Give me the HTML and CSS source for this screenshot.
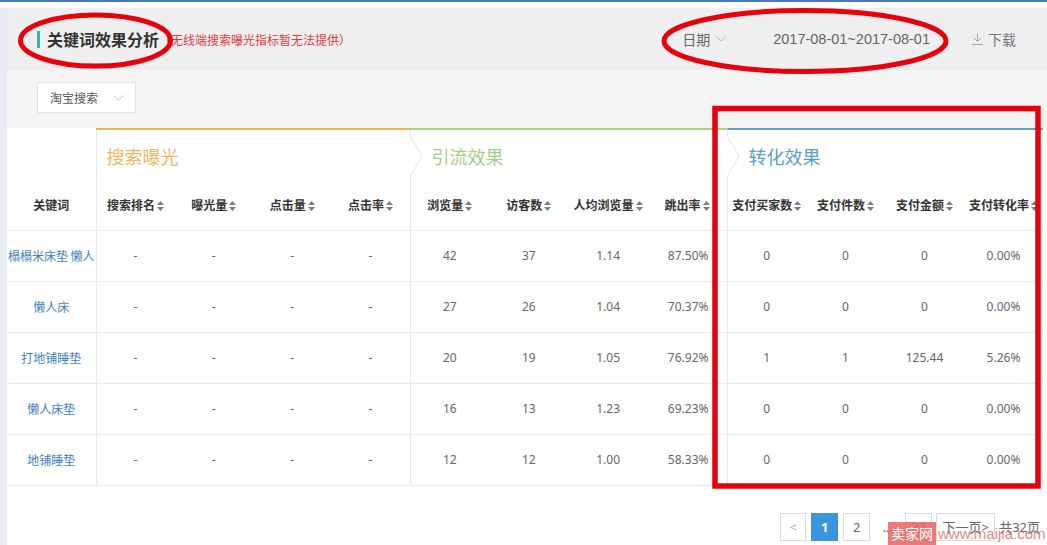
FILE: index.html
```html
<!DOCTYPE html>
<html lang="zh-CN">
<head>
<meta charset="utf-8">
<title>关键词效果分析</title>
<link rel="stylesheet" href="styles.css">
</head>
<body>
<div class="topline"></div>
<div class="page">
  <div class="strip"></div>
  <div class="main">
    <div class="header">
      <div class="title">
        <span class="title-bar"></span>
        <h1>关键词效果分析</h1>
        <span class="note">（无线端搜索曝光指标暂无法提供）</span>
      </div>
      <div class="tools">
        <span class="date-label">日期<svg class="chev" width="10" height="6" viewBox="0 0 10 6"><polyline points="0.5,0.5 5,5 9.5,0.5" fill="none" stroke="#c4c4c4" stroke-width="1"/></svg></span>
        <span class="date-range">2017-08-01~2017-08-01</span>
        <span class="download"><svg width="11" height="12" viewBox="0 0 11 12"><line x1="5.5" y1="0.5" x2="5.5" y2="8.5" stroke="#aaa" stroke-width="1"/><polyline points="2,5 5.5,8.5 9,5" fill="none" stroke="#aaa" stroke-width="1"/><line x1="0" y1="11.5" x2="11" y2="11.5" stroke="#aaa" stroke-width="1"/></svg>下载</span>
      </div>
    </div>
    <div class="filter">
      <div class="select">淘宝搜索<svg class="chev" width="11" height="6" viewBox="0 0 11 6"><polyline points="0.5,0.5 5.5,5 10.5,0.5" fill="none" stroke="#c4c4c4" stroke-width="1"/></svg></div>
    </div>
    <div class="content">
      <table class="data">
        <colgroup>
          <col class="c-kw">
          <col class="c-a"><col class="c-a"><col class="c-a"><col class="c-a">
          <col class="c-b"><col class="c-b"><col class="c-b"><col class="c-b">
          <col class="c-c"><col class="c-c"><col class="c-c"><col class="c-c">
        </colgroup>
        <thead>
          <tr class="groups">
            <th class="g-empty"></th>
            <th colspan="4" class="g g-search gs">搜索曝光</th>
            <th colspan="4" class="g g-flow gs"><svg class="notch" width="14" height="42" viewBox="0 0 14 42"><polyline points="0,0 12,20 0,41" fill="#fff" stroke="#e6e6e6" stroke-width="1"/></svg>引流效果</th>
            <th colspan="4" class="g g-conv gs"><svg class="notch" width="14" height="42" viewBox="0 0 14 42"><polyline points="0,0 12,20 0,41" fill="#fff" stroke="#e6e6e6" stroke-width="1"/></svg>转化效果</th>
          </tr>
          <tr class="cols">
            <th>关键词</th>
            <th class="gs">搜索排名<svg class="sort" width="7" height="10" viewBox="0 0 7 10"><polygon points="0,4 3.5,0 7,4" fill="#7d7d7d"/><polygon points="0,6 3.5,10 7,6" fill="#7d7d7d"/></svg></th>
            <th>曝光量<svg class="sort" width="7" height="10" viewBox="0 0 7 10"><polygon points="0,4 3.5,0 7,4" fill="#7d7d7d"/><polygon points="0,6 3.5,10 7,6" fill="#7d7d7d"/></svg></th>
            <th>点击量<svg class="sort" width="7" height="10" viewBox="0 0 7 10"><polygon points="0,4 3.5,0 7,4" fill="#7d7d7d"/><polygon points="0,6 3.5,10 7,6" fill="#7d7d7d"/></svg></th>
            <th>点击率<svg class="sort" width="7" height="10" viewBox="0 0 7 10"><polygon points="0,4 3.5,0 7,4" fill="#7d7d7d"/><polygon points="0,6 3.5,10 7,6" fill="#7d7d7d"/></svg></th>
            <th class="gs">浏览量<svg class="sort" width="7" height="10" viewBox="0 0 7 10"><polygon points="0,4 3.5,0 7,4" fill="#7d7d7d"/><polygon points="0,6 3.5,10 7,6" fill="#7d7d7d"/></svg></th>
            <th>访客数<svg class="sort" width="7" height="10" viewBox="0 0 7 10"><polygon points="0,4 3.5,0 7,4" fill="#7d7d7d"/><polygon points="0,6 3.5,10 7,6" fill="#4f8fc4"/></svg></th>
            <th>人均浏览量<svg class="sort" width="7" height="10" viewBox="0 0 7 10"><polygon points="0,4 3.5,0 7,4" fill="#7d7d7d"/><polygon points="0,6 3.5,10 7,6" fill="#7d7d7d"/></svg></th>
            <th>跳出率<svg class="sort" width="7" height="10" viewBox="0 0 7 10"><polygon points="0,4 3.5,0 7,4" fill="#7d7d7d"/><polygon points="0,6 3.5,10 7,6" fill="#7d7d7d"/></svg></th>
            <th class="gs">支付买家数<svg class="sort" width="7" height="10" viewBox="0 0 7 10"><polygon points="0,4 3.5,0 7,4" fill="#7d7d7d"/><polygon points="0,6 3.5,10 7,6" fill="#7d7d7d"/></svg></th>
            <th>支付件数<svg class="sort" width="7" height="10" viewBox="0 0 7 10"><polygon points="0,4 3.5,0 7,4" fill="#7d7d7d"/><polygon points="0,6 3.5,10 7,6" fill="#7d7d7d"/></svg></th>
            <th>支付金额<svg class="sort" width="7" height="10" viewBox="0 0 7 10"><polygon points="0,4 3.5,0 7,4" fill="#7d7d7d"/><polygon points="0,6 3.5,10 7,6" fill="#7d7d7d"/></svg></th>
            <th>支付转化率<svg class="sort" width="7" height="10" viewBox="0 0 7 10"><polygon points="0,4 3.5,0 7,4" fill="#7d7d7d"/><polygon points="0,6 3.5,10 7,6" fill="#7d7d7d"/></svg></th>
          </tr>
        </thead>
        <tbody>
          <tr>
            <td class="kw">榻榻米床垫 懒人</td>
            <td class="gs">-</td><td>-</td><td>-</td><td>-</td>
            <td class="gs">42</td><td>37</td><td>1.14</td><td class="rt">87.50%</td>
            <td class="gs">0</td><td>0</td><td>0</td><td>0.00%</td>
          </tr>
          <tr>
            <td class="kw">懒人床</td>
            <td class="gs">-</td><td>-</td><td>-</td><td>-</td>
            <td class="gs">27</td><td>26</td><td>1.04</td><td class="rt">70.37%</td>
            <td class="gs">0</td><td>0</td><td>0</td><td>0.00%</td>
          </tr>
          <tr>
            <td class="kw">打地铺睡垫</td>
            <td class="gs">-</td><td>-</td><td>-</td><td>-</td>
            <td class="gs">20</td><td>19</td><td>1.05</td><td class="rt">76.92%</td>
            <td class="gs">1</td><td>1</td><td>125.44</td><td>5.26%</td>
          </tr>
          <tr>
            <td class="kw">懒人床垫</td>
            <td class="gs">-</td><td>-</td><td>-</td><td>-</td>
            <td class="gs">16</td><td>13</td><td>1.23</td><td class="rt">69.23%</td>
            <td class="gs">0</td><td>0</td><td>0</td><td>0.00%</td>
          </tr>
          <tr>
            <td class="kw">地铺睡垫</td>
            <td class="gs">-</td><td>-</td><td>-</td><td>-</td>
            <td class="gs">12</td><td>12</td><td>1.00</td><td class="rt">58.33%</td>
            <td class="gs">0</td><td>0</td><td>0</td><td>0.00%</td>
          </tr>
        </tbody>
      </table>
      <div class="pager">
        <span class="pg">&lt;</span>
        <span class="pg active">1</span>
        <span class="pg">2</span>
        <span class="dots">...</span>
        <span class="pg">32</span>
        <span class="pg next">下一页&gt;</span>
        <span class="total">共32页</span>
      </div>
    </div>
  </div>
</div>
<div class="watermark"><span class="wm-box">卖家网</span><span class="wm-url">www.maijia.com</span></div>
<svg class="marks" width="1047" height="545" viewBox="0 0 1047 545">
  <ellipse cx="95.5" cy="40.5" rx="75" ry="25.5" fill="none" stroke="#e8000b" stroke-width="5"/>
  <ellipse cx="805" cy="41" rx="141" ry="30.5" fill="none" stroke="#e8000b" stroke-width="5"/>
  <rect x="715" y="108.5" width="323" height="377.5" fill="none" stroke="#e8000b" stroke-width="5.5"/>
</svg>
</body>
</html>
```
FILE: styles.css
```css
* { box-sizing: border-box; }
html, body {
  margin: 0;
  padding: 0;
  width: 1047px;
  height: 545px;
  overflow: hidden;
  background: #fff;
  font-family: "Noto Sans", "Noto Sans CJK SC", sans-serif;
  color: #666;
  position: relative;
}
.topline {
  height: 2px;
  background: #4a78c0;
  margin-bottom: 6px;
}
.page {
  display: flex;
  height: 537px;
}
.strip {
  width: 7px;
  flex: none;
  background: #e8edf2;
}
.main {
  flex: 1;
  min-width: 0;
  overflow: hidden;
  display: flex;
  flex-direction: column;
}
.header {
  height: 62px;
  flex: none;
  background: #efefef;
  display: flex;
  align-items: center;
  justify-content: space-between;
  padding: 0 31px 0 30px;
}
.title {
  display: flex;
  align-items: center;
}
.title-bar {
  width: 3px;
  height: 17px;
  background: #38b2ad;
  margin-right: 7px;
}
.title h1 {
  margin: 0;
  font-size: 16px;
  line-height: 22px;
  font-weight: bold;
  color: #333;
  font-family: "Noto Sans CJK SC", sans-serif;
}
.note {
  font-size: 12px;
  color: #e43c3c;
  line-height: 18px;
  margin-top: 2px;
  font-family: "Noto Sans CJK SC", sans-serif;
}
.tools {
  display: flex;
  align-items: center;
  font-size: 14px;
  color: #666;
}
.date-label {
  display: flex;
  align-items: center;
  font-family: "Noto Sans CJK SC", sans-serif;
}
.date-label .chev { margin-left: 6px; }
.date-range {
  margin-left: 47px;
  font-size: 14.5px;
  color: #666;
  font-family: "Liberation Sans", sans-serif;
}
.download {
  margin-left: 42px;
  display: flex;
  align-items: center;
  color: #777;
  font-family: "Noto Sans CJK SC", sans-serif;
}
.download svg { margin-right: 5px; }
.filter {
  height: 58px;
  flex: none;
  background: #f4f4f4;
  padding: 12px 30px 0;
}
.select {
  width: 99px;
  height: 31px;
  background: #fff;
  border: 1px solid #e2e2e2;
  display: flex;
  align-items: center;
  justify-content: space-between;
  padding: 0 11px 0 12px;
  font-size: 12px;
  color: #555;
  font-family: "Noto Sans CJK SC", sans-serif;
}
.content {
  flex: 1;
  background: #fff;
  overflow: hidden;
}
.data {
  border-collapse: collapse;
  table-layout: fixed;
  width: 1036px;
  font-size: 12px;
}
.c-kw { width: 89px; }
.c-a { width: 78.5px; }
.c-b { width: 79.25px; }
.c-c { width: 79px; }
.data th, .data td {
  padding: 0;
  text-align: center;
  white-space: nowrap;
  overflow: hidden;
}
.data .gs { border-left: 1px solid #e8e8e8; }
.data .groups th {
  height: 51px;
  vertical-align: top;
  text-align: left;
  padding-top: 15px;
  font-size: 18px;
  line-height: 22px;
  font-weight: normal;
  font-family: "Noto Sans CJK SC", sans-serif;
  position: relative;
  overflow: visible;
}
.data .groups th.g-search { border-top: 2px solid #f0b44c; color: #f1b75c; padding-left: 10px; }
.data .groups th.g-flow { border-top: 2px solid #a9d18e; color: #a3ce88; padding-left: 21px; }
.data .groups th.g-conv { border-top: 2px solid #5ba3cc; color: #5b9dcb; padding-left: 21px; }
.notch {
  position: absolute;
  left: -1px;
  top: 6px;
}
.cols th {
  height: 50px;
  vertical-align: middle;
  font-size: 12px;
  font-weight: bold;
  color: #333;
  border-bottom: 1px solid #ececec;
  font-family: "Noto Sans CJK SC", sans-serif;
  line-height: 16px;
}
.sort {
  margin-left: 2px;
  vertical-align: -1px;
}
.data td {
  height: 51px;
  border-bottom: 1px solid #ececec;
  color: #666;
  line-height: 16px;
  font-family: "Noto Sans", "Noto Sans CJK SC", sans-serif;
}
.data td.kw {
  color: #3f7fbf;
  font-family: "Noto Sans CJK SC", sans-serif;
}
.data td.rt {
  text-align: right;
  padding-right: 18px;
}
.pager {
  display: flex;
  justify-content: flex-end;
  align-items: center;
  margin-top: 27px;
  padding-right: 7px;
  font-size: 13px;
  font-family: "Noto Sans", "Noto Sans CJK SC", sans-serif;
}
.pg {
  height: 28px;
  width: 27px;
  margin-right: 5px;
  border: 1px solid #dcdcdc;
  display: flex;
  align-items: center;
  justify-content: center;
  color: #666;
  background: #fff;
}
.pg:first-child { width: 26px; color: #aaa; }
.pg.active {
  background: #3a96dc;
  border-color: #3a96dc;
  color: #fff;
  font-weight: bold;
}
.dots { width: 25px; margin-right: 5px; text-align: center; color: #666; }
.pg.next { width: 59px; margin-right: 4px; margin-left: -1px; }
.total { color: #666; white-space: nowrap; }
.watermark {
  position: absolute;
  left: 888px;
  top: 522px;
  display: flex;
  align-items: center;
  white-space: nowrap;
  pointer-events: none;
}
.wm-box {
  background: rgba(232, 98, 98, 0.85);
  color: #fff;
  font-size: 14px;
  line-height: 23px;
  padding: 0 3px;
  font-family: "Noto Sans CJK SC", sans-serif;
}
.wm-url {
  color: rgba(220, 90, 90, 0.75);
  font-size: 15px;
  margin-left: 2px;
  font-family: "Liberation Sans", sans-serif;
}
.marks {
  position: absolute;
  left: 0;
  top: 0;
  pointer-events: none;
}
```
